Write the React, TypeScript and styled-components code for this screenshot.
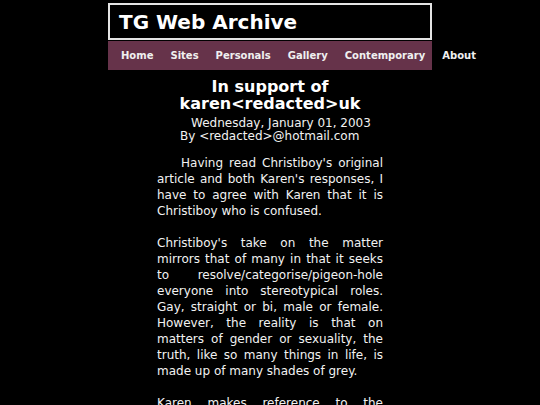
import React from "react";
import styled, { createGlobalStyle } from "styled-components";

const Global = createGlobalStyle`
  html, body { margin: 0; padding: 0; background: #000; }
  body { font-family: "DejaVu Sans", Verdana, sans-serif; color: #fff; }
`;

const Page = styled.div`
  display: flex;
  flex-direction: column;
  align-items: center;
  padding-top: 3px;
`;

const Masthead = styled.header`
  width: 324px;
  box-sizing: border-box;
  border: 2px solid #e4e4e4;
  height: 37px;
  display: flex;
  align-items: center;
  padding-left: 9px;
`;

const SiteTitle = styled.h1`
  margin: 0;
  font-size: 20px;
  line-height: 24px;
  font-weight: bold;
  color: #fff;
`;

const Nav = styled.nav`
  width: 324px;
  height: 29px;
  margin-top: 1px;
  background: #66334a;
  display: flex;
  align-items: center;
  padding-left: 4.5px;
  box-sizing: border-box;
  white-space: nowrap;
`;

const NavLink = styled.a`
  color: #f0f0f0;
  font-size: 10px;
  font-weight: bold;
  text-decoration: none;
  padding: 0 8.5px;
  flex-shrink: 0;
`;

const Article = styled.article`
  width: 226px;
  margin-top: 8px;
`;

const Headline = styled.h2`
  margin: 0;
  text-align: center;
  font-size: 16px;
  line-height: 17px;
  font-weight: bold;
`;

const Dateline = styled.div`
  font-size: 12px;
  line-height: 13px;
  margin-top: 5px;
  padding-left: 34px;
  color: #f2f2f2;
`;

const Byline = styled.div`
  font-size: 12px;
  line-height: 13px;
  padding-left: 23px;
  margin-bottom: 12px;
  color: #f2f2f2;
`;

const Para = styled.div`
  margin: 0 0 16px 0;
  display: flex;
  flex-direction: column;
`;

const Line = styled.span<{ $last?: boolean; $indent?: boolean }>`
  display: block;
  font-size: 12px;
  line-height: 16px;
  white-space: nowrap;
  text-align: justify;
  text-align-last: ${(p) => (p.$last ? "left" : "justify")};
  padding-left: ${(p) => (p.$indent ? "24px" : "0")};
  color: #f2f2f2;
`;

const links = ["Home", "Sites", "Personals", "Gallery", "Contemporary", "About"];

const paragraphs: { indent?: boolean; lines: string[] }[] = [
  {
    indent: true,
    lines: [
      "Having read Christiboy's original",
      "article and both Karen's responses, I",
      "have to agree with Karen that it is",
      "Christiboy who is confused.",
    ],
  },
  {
    lines: [
      "Christiboy's take on the matter",
      "mirrors that of many in that it seeks",
      "to resolve/categorise/pigeon-hole",
      "everyone into stereotypical roles.",
      "Gay, straight or bi, male or female.",
      "However, the reality is that on",
      "matters of gender or sexuality, the",
      "truth, like so many things in life, is",
      "made up of many shades of grey.",
    ],
  },
  {
    lines: [
      "Karen makes reference to the",
      "fact that many people find it hard",
      "to accept what they do not",
      "understand.",
    ],
  },
];

export default function App() {
  return (
    <>
      <Global />
      <Page>
        <Masthead>
          <SiteTitle>TG Web Archive</SiteTitle>
        </Masthead>
        <Nav>
          {links.map((l) => (
            <NavLink key={l} href="#">{l}</NavLink>
          ))}
        </Nav>
        <Article>
          <Headline>In support of<br />karen&lt;redacted&gt;uk</Headline>
          <Dateline>Wednesday, January 01, 2003</Dateline>
          <Byline>By &lt;redacted&gt;@hotmail.com</Byline>
          {paragraphs.map((p, i) => (
            <Para key={i}>
              {p.lines.map((ln, j) => (
                <Line
                  key={j}
                  $indent={p.indent && j === 0}
                  $last={j === p.lines.length - 1}
                >
                  {ln}
                </Line>
              ))}
            </Para>
          ))}
        </Article>
      </Page>
    </>
  );
}
